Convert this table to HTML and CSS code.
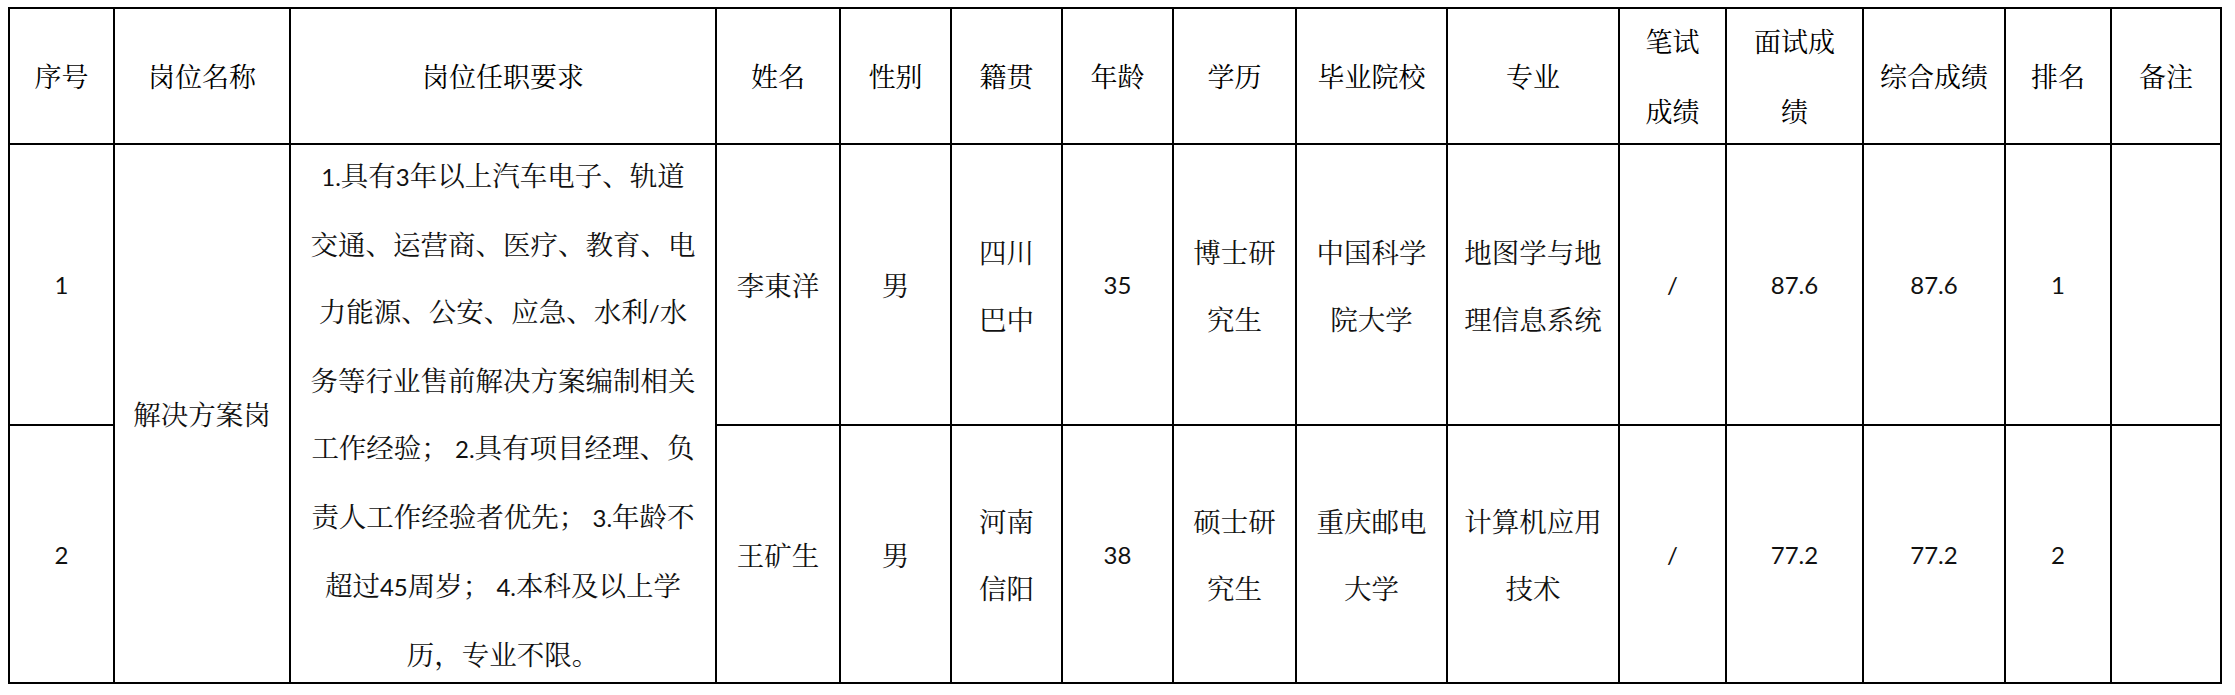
FILE: index.html
```html
<!DOCTYPE html>
<html lang="zh-CN">
<head>
<meta charset="utf-8">
<title>拟聘人员名单</title>
<link rel="stylesheet" href="styles.css">
</head>
<body>
<div class="sheet">
  <div class="cell head"><div class="txt">序号</div></div>
  <div class="cell head"><div class="txt">岗位名称</div></div>
  <div class="cell head"><div class="txt">岗位任职要求</div></div>
  <div class="cell head"><div class="txt">姓名</div></div>
  <div class="cell head"><div class="txt">性别</div></div>
  <div class="cell head"><div class="txt">籍贯</div></div>
  <div class="cell head"><div class="txt">年龄</div></div>
  <div class="cell head"><div class="txt">学历</div></div>
  <div class="cell head"><div class="txt">毕业院校</div></div>
  <div class="cell head"><div class="txt">专业</div></div>
  <div class="cell head"><div class="txt">笔试<br>成绩</div></div>
  <div class="cell head"><div class="txt">面试成<br>绩</div></div>
  <div class="cell head"><div class="txt">综合成绩</div></div>
  <div class="cell head"><div class="txt">排名</div></div>
  <div class="cell head"><div class="txt">备注</div></div>

  <div class="cell body num"><div class="txt">1</div></div>
  <div class="cell body span2"><div class="txt">解决方案岗</div></div>
  <div class="cell body span2"><div class="txt"><span class="n">1.</span>具有<span class="n">3</span>年以上汽车电子、轨道<br>交通、运营商、医疗、教育、电<br>力能源、公安、应急、水利<span class="n">/</span>水<br>务等行业售前解决方案编制相关<br>工作经验；<span class="n"> 2.</span>具有项目经理、负<br>责人工作经验者优先；<span class="n"> 3.</span>年龄不<br>超过<span class="n">45</span>周岁；<span class="n"> 4.</span>本科及以上学<br>历，专业不限。</div></div>
  <div class="cell body"><div class="txt">李東洋</div></div>
  <div class="cell body"><div class="txt">男</div></div>
  <div class="cell body"><div class="txt">四川<br>巴中</div></div>
  <div class="cell body num"><div class="txt">35</div></div>
  <div class="cell body"><div class="txt">博士研<br>究生</div></div>
  <div class="cell body"><div class="txt">中国科学<br>院大学</div></div>
  <div class="cell body"><div class="txt">地图学与地<br>理信息系统</div></div>
  <div class="cell body num"><div class="txt">/</div></div>
  <div class="cell body num"><div class="txt">87.6</div></div>
  <div class="cell body num"><div class="txt">87.6</div></div>
  <div class="cell body num"><div class="txt">1</div></div>
  <div class="cell body"></div>

  <div class="cell body num"><div class="txt">2</div></div>
  <div class="cell body"><div class="txt">王矿生</div></div>
  <div class="cell body"><div class="txt">男</div></div>
  <div class="cell body"><div class="txt">河南<br>信阳</div></div>
  <div class="cell body num"><div class="txt">38</div></div>
  <div class="cell body"><div class="txt">硕士研<br>究生</div></div>
  <div class="cell body"><div class="txt">重庆邮电<br>大学</div></div>
  <div class="cell body"><div class="txt">计算机应用<br>技术</div></div>
  <div class="cell body num"><div class="txt">/</div></div>
  <div class="cell body num"><div class="txt">77.2</div></div>
  <div class="cell body num"><div class="txt">77.2</div></div>
  <div class="cell body num"><div class="txt">2</div></div>
  <div class="cell body"></div>
</div>
</body>
</html>
```

FILE: styles.css
```css
html, body {
  margin: 0;
  padding: 0;
  background: #ffffff;
}

.sheet {
  display: grid;
  grid-template-columns: 103px 174px 424px 122px 109px 109px 109px 121px 149px 170px 105px 135px 140px 104px 108px;
  grid-template-rows: 134px 279px 256px;
  gap: 2px;
  padding: 2px;
  background: #000000;
  width: max-content;
  margin: 7px 0 0 8px;
}

.cell {
  background: #ffffff;
  display: flex;
  align-items: center;
  justify-content: center;
  text-align: center;
  white-space: nowrap;
  color: #000000;
  overflow: hidden;
}

.txt {
  display: block;
}

.head {
  font-family: "Noto Serif CJK SC", "Noto Sans CJK SC", serif;
  font-size: 27px;
  line-height: 70px;
  font-weight: 400;
}

.body {
  font-family: "Noto Serif CJK SC", "Noto Sans CJK SC", serif;
  font-size: 27.5px;
  line-height: 67px;
  font-weight: 400;
  color: #111111;
}

.span2 {
  grid-row: span 2;
}

.num,
.n {
  font-family: Lato, "Liberation Sans", sans-serif;
  font-size: 24px;
}

.num {
  line-height: 67px;
}
```
